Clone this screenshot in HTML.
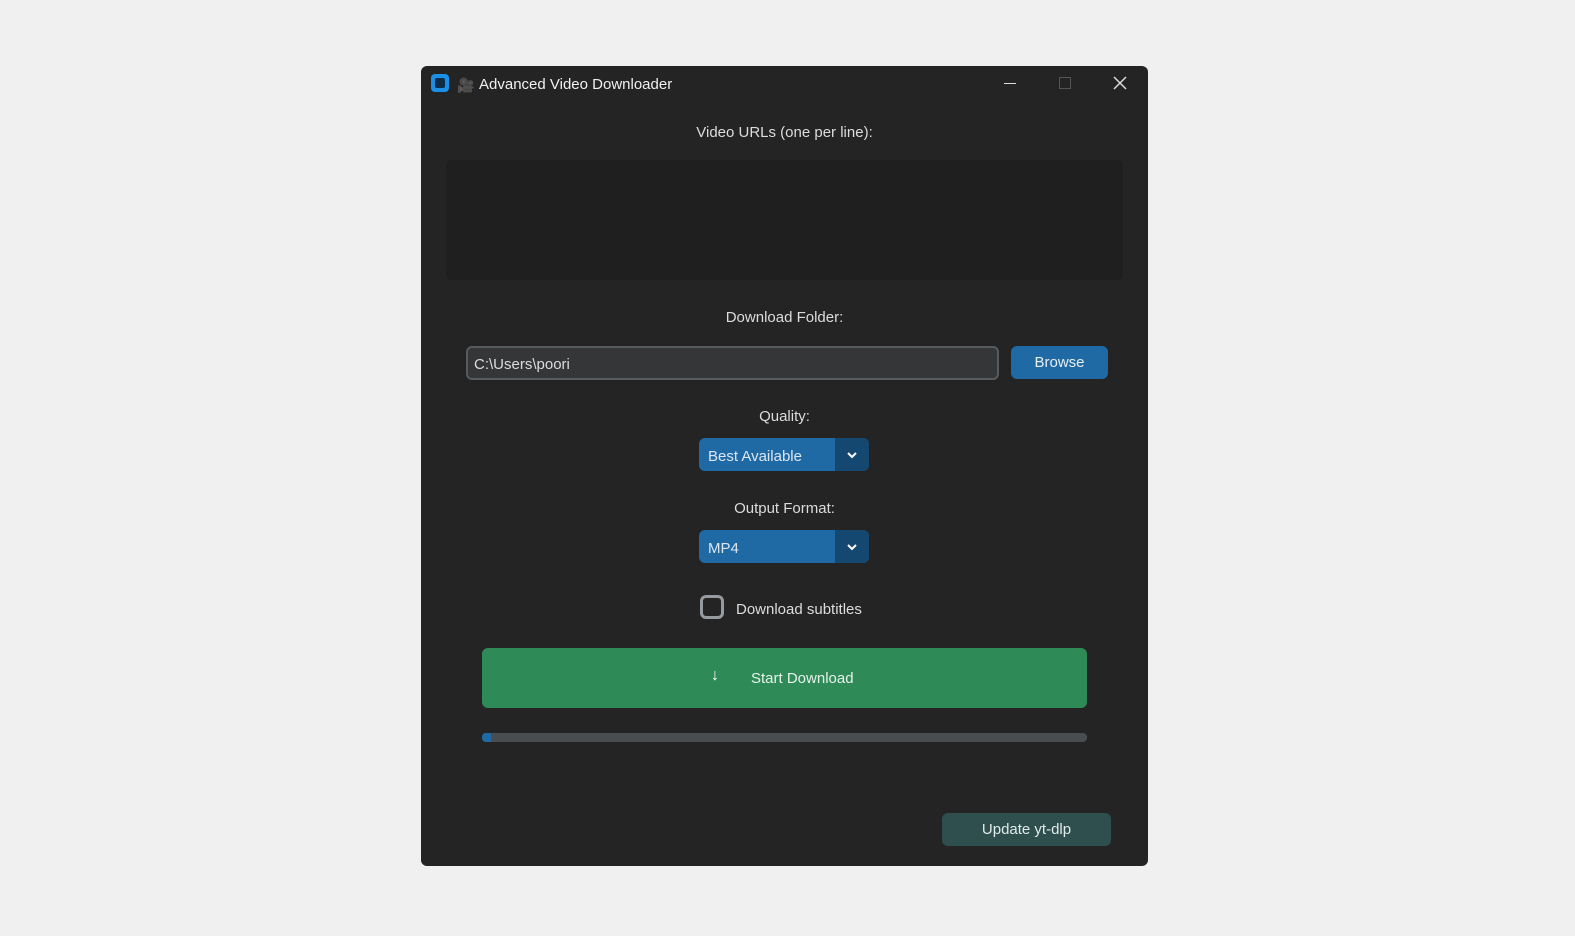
<!DOCTYPE html>
<html><head><style>
body{margin:0;width:1575px;height:936px;background:#f0f0f0;position:relative;overflow:hidden;font-family:"Liberation Sans",sans-serif;}
.a{position:absolute}
.win{left:421px;top:66px;width:727px;height:800px;background:#242424;border-radius:6px;}
.t{color:#dcdcdc;font-size:15px}
</style></head><body>
<div class="a win"></div>
<div class="a" style="left:431px;top:74px;width:18px;height:18px;background:#1b8fe6;border-radius:4px"></div>
<div class="a" style="left:435px;top:78px;width:10px;height:10px;background:#0c2c4a;border-radius:2px"></div>
<div class="a t" style="left:457px;top:77px;font-size:14px">🎥</div>
<div class="a" style="left:479px;top:76px;color:#f0f0f0;font-size:15px">Advanced Video Downloader</div>
<div class="a" style="left:1004px;top:83px;width:12px;height:1px;background:#ddd"></div>
<div class="a" style="left:1059px;top:77px;width:10px;height:10px;border:1px solid #555"></div>
<svg class="a" style="left:1113px;top:76px" width="14" height="14"><path d="M1 1l12 12M13 1L1 13" stroke="#ddd" stroke-width="1.5"/></svg>
<div class="a t" style="left:421px;width:727px;text-align:center;top:124px">Video URLs (one per line):</div>
<div class="a" style="left:446px;top:160px;width:677px;height:120px;background:#1f1f1f;border-radius:6px"></div>
<div class="a t" style="left:421px;width:727px;text-align:center;top:309px">Download Folder:</div>
<div class="a" style="left:466px;top:346px;width:529px;height:30px;background:#343638;border:2px solid #565b5e;border-radius:6px"></div>
<div class="a t" style="left:474px;top:356px">C:\Users\poori</div>
<div class="a" style="left:1011px;top:346px;width:97px;height:33px;background:#1f6aa5;border-radius:6px;color:#e8eef5;font-size:15px;text-align:center;line-height:34px">Browse</div>
<div class="a t" style="left:421px;width:727px;text-align:center;top:408px">Quality:</div>
<div class="a" style="left:699px;top:438px;width:170px;height:33px;background:#1f6aa5;border-radius:6px"></div>
<div class="a" style="left:835px;top:438px;width:34px;height:33px;background:#144870;border-radius:0 6px 6px 0"></div>
<div class="a" style="left:708px;top:448px;color:#dce6f0;font-size:15px">Best Available</div>
<div class="a t" style="left:421px;width:727px;text-align:center;top:500px">Output Format:</div>
<div class="a" style="left:699px;top:530px;width:170px;height:33px;background:#1f6aa5;border-radius:6px"></div>
<div class="a" style="left:835px;top:530px;width:34px;height:33px;background:#144870;border-radius:0 6px 6px 0"></div>
<div class="a" style="left:708px;top:540px;color:#dce6f0;font-size:15px">MP4</div>
<svg class="a" style="left:846px;top:450px" width="12" height="10"><path d="M2 3l4 4 4-4" stroke="#fff" stroke-width="2" fill="none"/></svg>
<svg class="a" style="left:846px;top:542px" width="12" height="10"><path d="M2 3l4 4 4-4" stroke="#fff" stroke-width="2" fill="none"/></svg>
<div class="a" style="left:700px;top:595px;width:24px;height:24px;border:3px solid #949a9e;border-radius:6px;box-sizing:border-box"></div>
<div class="a t" style="left:736px;top:601px">Download subtitles</div>
<div class="a" style="left:482px;top:648px;width:605px;height:60px;background:#2e8b57;border-radius:6px"></div>
<div class="a" style="left:711px;top:667px;color:#fff;font-size:16px;font-weight:bold">↓</div>
<div class="a" style="left:751px;top:670px;color:#e6f2ea;font-size:15px">Start Download</div>
<div class="a" style="left:482px;top:733px;width:605px;height:9px;background:#4a4d50;border-radius:4px"></div>
<div class="a" style="left:482px;top:733px;width:9px;height:9px;background:#1f6aa5;border-radius:4px 0 0 4px"></div>
<div class="a" style="left:942px;top:813px;width:169px;height:33px;background:#2f4f4f;border-radius:6px;color:#e0eaea;font-size:15px;text-align:center;line-height:34px">Update yt-dlp</div>
</body></html>
